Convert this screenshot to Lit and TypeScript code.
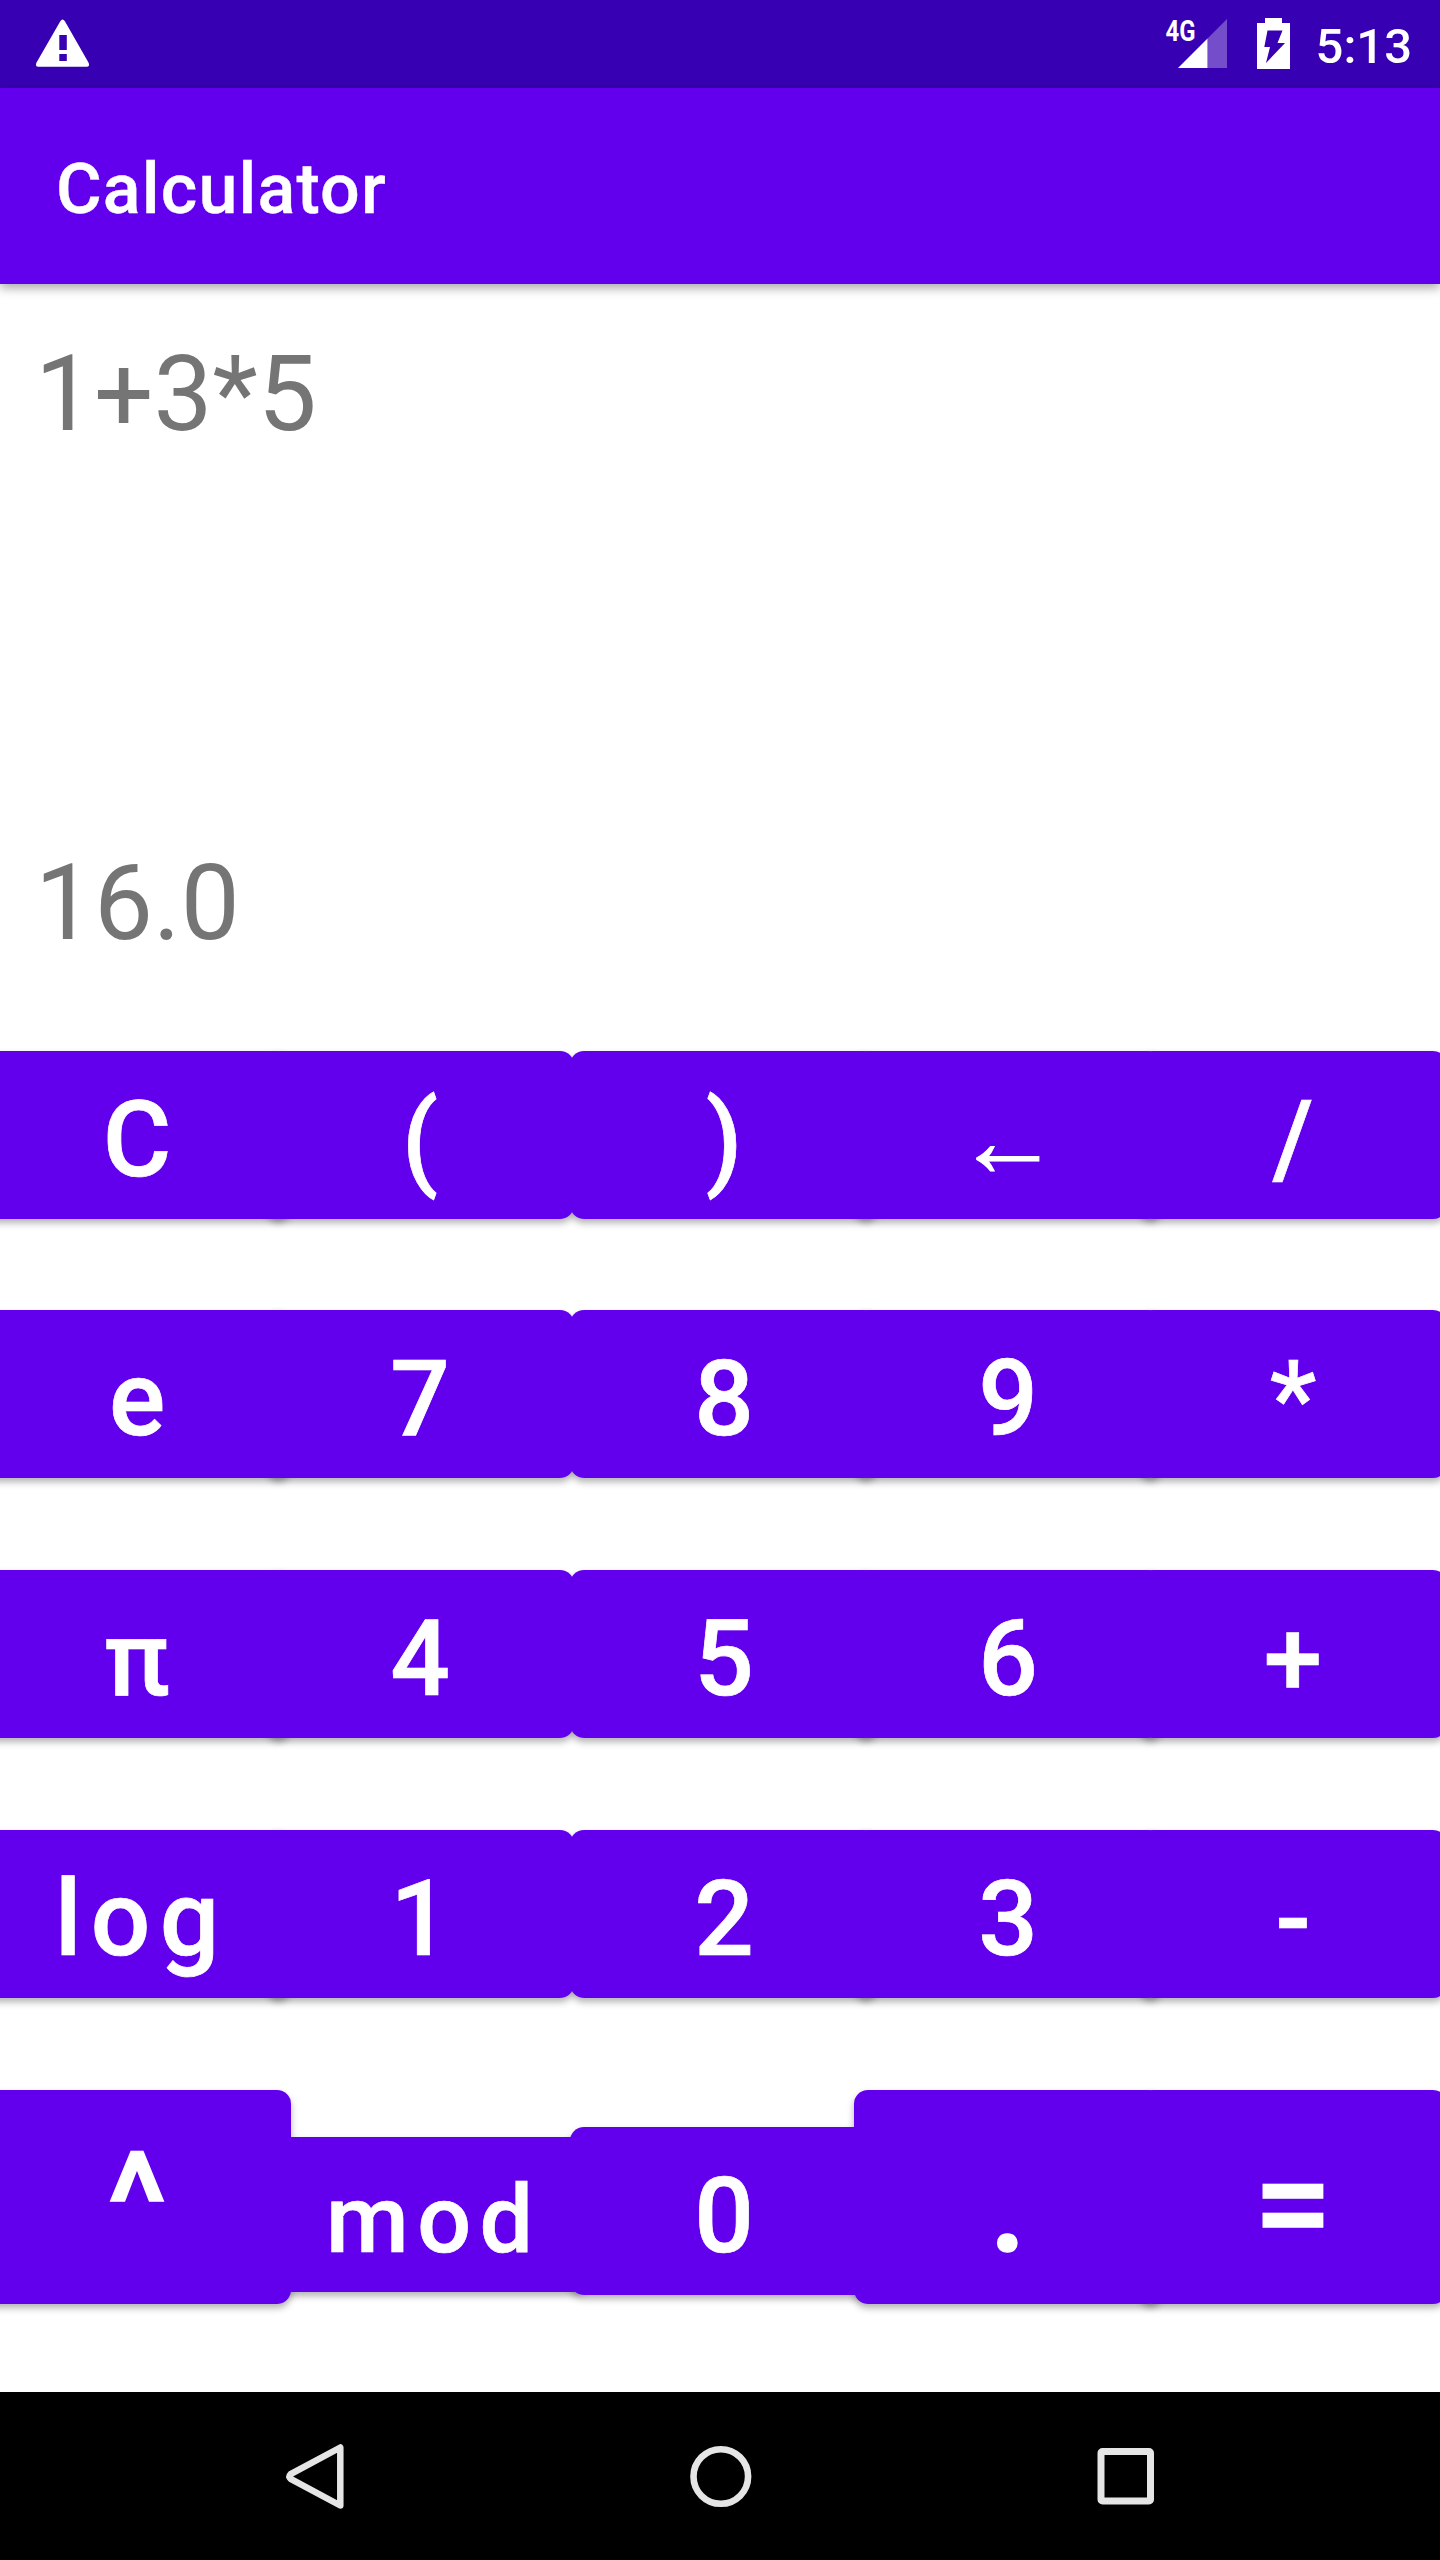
import { LitElement, html, css } from "lit";
import { customElement } from "lit/decorators.js";

const KEYS: string[][] = [
  ["C", "(", ")", "←", "/"],
  ["e", "7", "8", "9", "*"],
  ["π", "4", "5", "6", "+"],
  ["log", "1", "2", "3", "-"],
];

const LAST_ROW: { label: string; kind: string }[] = [
  { label: "^", kind: "tall" },
  { label: "mod", kind: "mod" },
  { label: "0", kind: "zero" },
  { label: ".", kind: "tall" },
  { label: "=", kind: "tall" },
];

@customElement("app-root")
export class AppRoot extends LitElement {
  static styles = css`
    :host {
      display: block;
      width: 1440px;
      height: 2560px;
      overflow: hidden;
      background: #fff;
      font-family: Roboto, "Noto Sans", sans-serif;
    }
    .screen {
      display: flex;
      flex-direction: column;
      height: 2560px;
    }
    .status {
      display: flex;
      align-items: flex-start;
      height: 88px;
      background: #3700b3;
      color: #fff;
      flex: none;
    }
    .warn {
      margin: 19px 0 0 35px;
    }
    .right {
      display: flex;
      margin-left: auto;
      padding-right: 28px;
    }
    .net {
      display: flex;
      width: 62px;
      height: 88px;
      margin-right: 30px;
    }
    .battery {
      margin: 18px 25px 0 0;
    }
    .clock {
      font-size: 49px;
      font-weight: 500;
      line-height: 88px;
      padding-top: 3px;
      height: 85px;
    }
    .appbar {
      display: flex;
      align-items: center;
      height: 196px;
      padding-left: 56px;
      background: #6200ee;
      color: #fff;
      font-size: 70px;
      font-weight: 500;
      letter-spacing: 0.0165em;
      box-shadow: 0 4px 10px rgba(0, 0, 0, 0.34);
      flex: none;
    }
    .title {
      padding-top: 6px;
      -webkit-text-stroke: 0.4px #fff;
    }
    .display {
      display: flex;
      flex-direction: column;
      height: 767px;
      padding-left: 35px;
      color: #757575;
      font-size: 105px;
      line-height: 123px;
      flex: none;
    }
    .expr {
      margin-top: 49px;
      height: 509px;
    }
    .pad {
      display: flex;
      flex-direction: column;
      gap: 92px;
      flex: 1;
    }
    .row {
      display: flex;
      align-items: flex-start;
      isolation: isolate;
      width: 1465px;
      height: 168px;
      margin-left: -17px;
      flex: none;
    }
    .row:first-child {
      margin-bottom: -1px;
    }
    .row.last {
      height: 214px;
    }
    .key {
      position: relative;
      display: flex;
      align-items: center;
      justify-content: center;
      box-sizing: border-box;
      width: 308px;
      height: 168px;
      padding-top: 11px;
      border-radius: 14px;
      background: #6200ee;
      color: #fff;
      font-size: 105px;
      font-weight: 500;
      line-height: 123px;
      flex: none;
      -webkit-text-stroke: 0.7px #fff;
    }
    .key::before {
      content: "";
      position: absolute;
      inset: 0;
      z-index: -1;
      border-radius: 14px;
      box-shadow: 0 4px 7px rgba(0, 0, 0, 0.3);
    }
    .key:nth-child(2) {
      margin-left: -25px;
    }
    .key:nth-child(3) {
      margin-left: -4px;
    }
    .key:nth-child(4) {
      margin-left: -24px;
    }
    .key:nth-child(5) {
      margin-left: -23px;
    }
    .label {
      letter-spacing: 0.0893em;
      margin-right: -0.0893em;
    }
    .arrow {
      font-family: "Liberation Sans", sans-serif;
      letter-spacing: 0;
      margin: 0 0 3px;
      -webkit-text-stroke: 1px #fff;
    }
    .key.tall {
      height: 214px;
      font-size: 140px;
      line-height: 164px;
      padding-top: 12px;
      -webkit-text-stroke: 1.4px #fff;
    }
    .key.mod {
      width: 317px;
      height: 155px;
      margin: 47px 0 0 -20px;
      padding-top: 9px;
      font-size: 95px;
    }
    .key.zero {
      margin: 37px 0 0 -18px;
    }
    .nav {
      display: flex;
      align-items: center;
      justify-content: space-between;
      height: 168px;
      padding: 0 274px 0 275px;
      background: #000;
      flex: none;
    }
  `;

  private key(label: string, kind = "") {
    return html`<div class="key ${kind}">
      <span class="label ${label === "←" ? "arrow" : ""}">${label}</span>
    </div>`;
  }

  render() {
    return html`
      <div class="screen">
        <div class="status">
          <svg class="warn" width="56" height="50" viewBox="35 19 56 50">
            <path
              fill="#fff"
              fill-rule="evenodd"
              d="M60.3 21.2Q62.5 18 64.9 21.2L88.6 62.8Q90 66.7 87 66.7H38Q35 66.7 36.4 62.8ZM59.3 35V50H66.8V35ZM59.3 54V61H66.8V54Z"
            />
          </svg>
          <div class="right">
            <svg class="net" width="62" height="88" viewBox="1165 0 62 88">
              <path fill="#fff" fill-opacity=".3" d="M1207.5 38.5L1227 19V68H1207.5Z" />
              <path fill="#fff" d="M1178 68L1207.5 38.5V68Z" />
              <text x="1165.5" y="41" fill="#fff" font-size="29" font-weight="700" textLength="30" lengthAdjust="spacingAndGlyphs">4G</text>
            </svg>
            <svg class="battery" width="34" height="52" viewBox="1257 18 34 52">
              <path
                fill="#fff"
                fill-rule="evenodd"
                d="M1265 18H1282V23H1290V69H1257V23H1265ZM1267.5 30.5H1282.5L1277.5 43H1285L1266 63L1270 47H1264.3Z"
              />
            </svg>
            <div class="clock">5:13</div>
          </div>
        </div>
        <div class="appbar"><div class="title">Calculator</div></div>
        <div class="display">
          <div class="expr">1+3*5</div>
          <div class="result">16.0</div>
        </div>
        <div class="pad">
          ${KEYS.map((r) => html`<div class="row">${r.map((k) => this.key(k))}</div>`)}
          <div class="row last">${LAST_ROW.map((k) => this.key(k.label, k.kind))}</div>
        </div>
        <div class="nav">
          <svg width="80" height="80" viewBox="275 2436 80 80">
            <path d="M340.3 2447.5V2505.5L290.6 2478.8Q288.4 2476.5 290.6 2474.2Z" fill="none" stroke="#e5e5e5" stroke-width="6.5" stroke-linejoin="round" />
          </svg>
          <svg width="80" height="80" viewBox="680.5 2436 80 80">
            <circle cx="720.3" cy="2476.5" r="27.3" fill="none" stroke="#e5e5e5" stroke-width="6.6" />
          </svg>
          <svg width="80" height="80" viewBox="1086 2436 80 80">
            <rect x="1101" y="2451.5" width="49.5" height="49.5" rx="1.5" fill="none" stroke="#e5e5e5" stroke-width="7" />
          </svg>
        </div>
      </div>
    `;
  }
}
